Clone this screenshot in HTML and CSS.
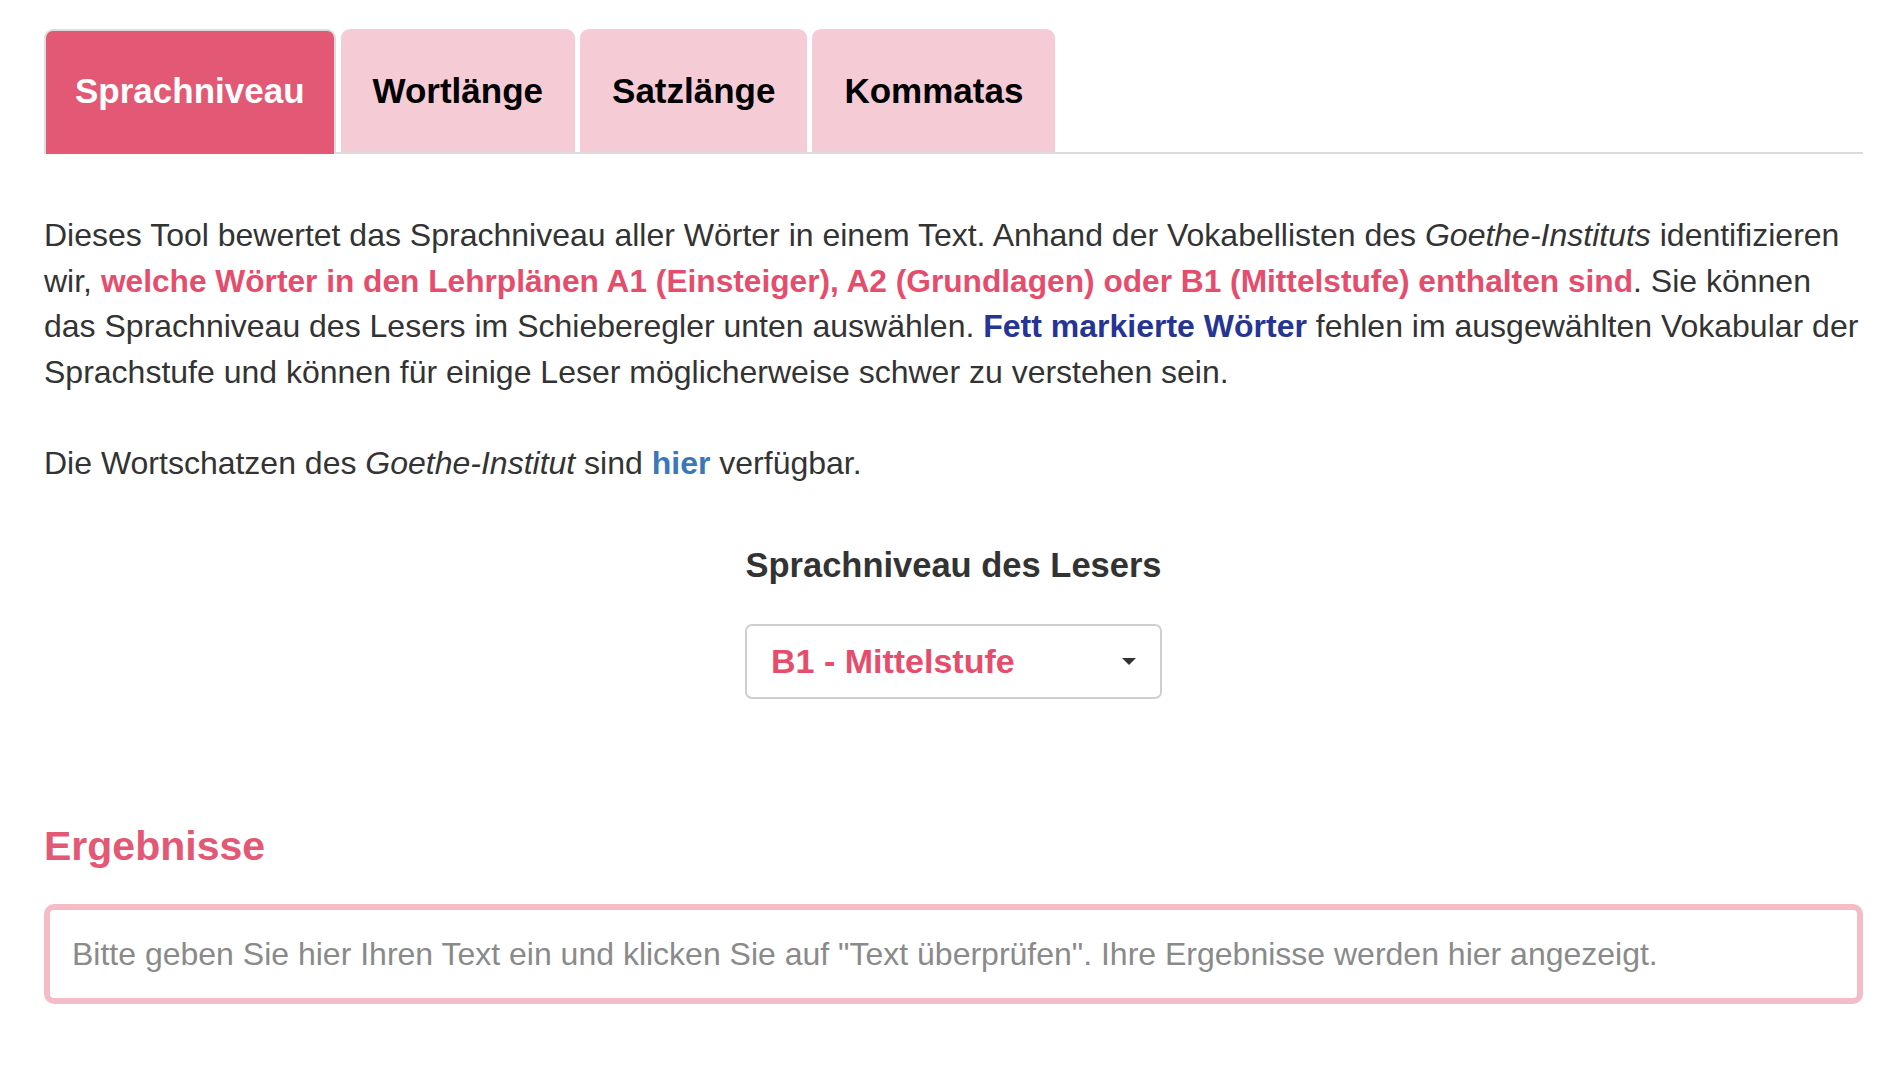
FILE: index.html
```html
<!DOCTYPE html>
<html lang="de">
<head>
<meta charset="utf-8">
<title>Sprachniveau</title>
<link rel="stylesheet" href="styles.css">
</head>
<body>
<div class="page">
  <ul class="tabs">
    <li class="tab active">Sprachniveau</li>
    <li class="tab">Wortlänge</li>
    <li class="tab">Satzlänge</li>
    <li class="tab">Kommatas</li>
  </ul>
  <div class="content">
    <p class="text">Dieses Tool bewertet das Sprachniveau aller Wörter in einem Text. Anhand der Vokabellisten des <em>Goethe-Instituts</em> identifizieren wir, <strong class="pink">welche Wörter in den Lehrplänen A1 (Einsteiger), A2 (Grundlagen) oder B1 (Mittelstufe) enthalten sind</strong>. Sie können das Sprachniveau des Lesers im Schieberegler unten auswählen. <strong class="navy">Fett markierte Wörter</strong> fehlen im ausgewählten Vokabular der Sprachstufe und können für einige Leser möglicherweise schwer zu verstehen sein.</p>
    <p class="text">Die Wortschatzen des <em>Goethe-Institut</em> sind <a class="link" href="#">hier</a> verfügbar.</p>
    <div class="level">
      <h3 class="level-title">Sprachniveau des Lesers</h3>
      <div class="select">
        <span class="select-value">B1 - Mittelstufe</span>
        <span class="caret"></span>
      </div>
    </div>
    <h2 class="results-title">Ergebnisse</h2>
    <div class="results-box">Bitte geben Sie hier Ihren Text ein und klicken Sie auf "Text überprüfen". Ihre Ergebnisse werden hier angezeigt.</div>
  </div>
</div>
</body>
</html>
```
FILE: styles.css
```css
html, body {
  margin: 0;
  padding: 0;
  background: #fff;
}
body {
  font-family: "Liberation Sans", Arial, Helvetica, sans-serif;
  color: #333;
}
.page {
  padding: 29px 39px 0 44px;
}
.tabs {
  list-style: none;
  margin: 0;
  padding: 0;
  display: flex;
  gap: 5px;
  border-bottom: 2px solid #dcdcdc;
}
.tab {
  font-size: 35px;
  font-weight: 700;
  line-height: 45px;
  padding: 37px 30px 39px;
  border: 2px solid transparent;
  border-bottom: 0;
  border-radius: 9px 9px 0 0;
  background: #f5ccd5;
  color: #000;
}
.tab.active {
  background: #e35874;
  color: #fff;
  border-color: #dedede;
  margin-bottom: -2px;
  padding: 37px 29px 41px;
}
.content {
  padding-top: 59px;
}
.text {
  font-size: 32px;
  line-height: 45.5px;
  margin: 0 0 45.5px;
}
.text em {
  font-style: italic;
}
.pink {
  color: #e64d6d;
  font-weight: 700;
  font-size: 0.99em;
}
.navy {
  color: #263593;
  font-weight: 700;
}
.link {
  color: #3b78b8;
  font-weight: 700;
  text-decoration: none;
}
.level {
  display: flex;
  flex-direction: column;
  align-items: center;
  margin-top: 60px;
}
.level-title {
  margin: 0;
  font-size: 34.5px;
  line-height: 38px;
  font-weight: 700;
  color: #333;
}
.select {
  margin-top: 40px;
  width: 417px;
  height: 75px;
  box-sizing: border-box;
  border: 2px solid #cfcfcf;
  border-radius: 7px;
  display: flex;
  align-items: center;
  justify-content: space-between;
  padding: 0 24px 0 24px;
}
.select-value {
  color: #e64d6d;
  font-weight: 700;
  font-size: 34px;
}
.caret {
  width: 0;
  height: 0;
  border-left: 7.5px solid transparent;
  border-right: 7.5px solid transparent;
  border-top: 7px solid #333;
}
.results-title {
  margin: 124px 0 0;
  font-size: 41px;
  line-height: 46px;
  font-weight: 700;
  color: #e35874;
}
.results-box {
  margin-top: 35px;
  height: 100px;
  box-sizing: border-box;
  border: 6px solid #f4bcc7;
  border-radius: 10px;
  padding: 0 22px;
  display: flex;
  align-items: center;
  font-size: 32px;
  color: #8a8a8a;
}
```
